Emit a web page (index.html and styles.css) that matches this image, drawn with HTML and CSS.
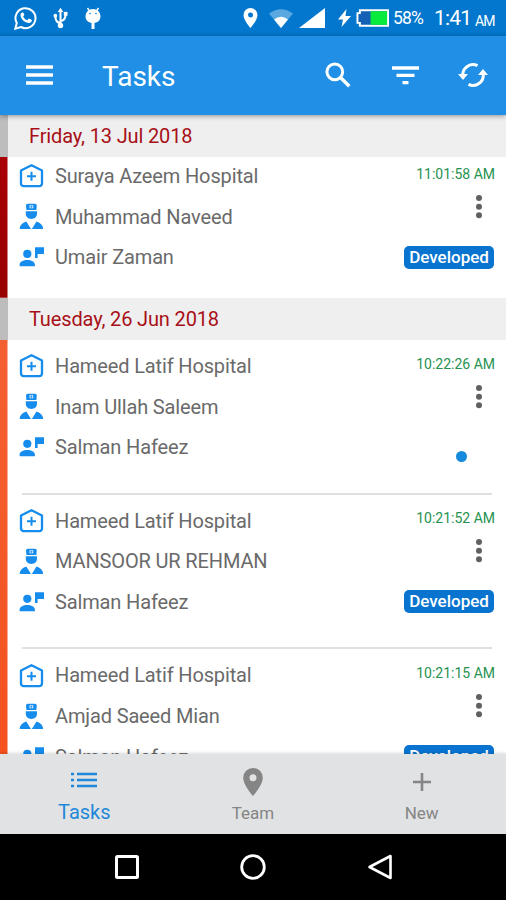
FILE: index.html
```html
<!DOCTYPE html>
<html lang="en">
<head>
<meta charset="utf-8">
<title>Tasks</title>
<link rel="stylesheet" href="styles.css">
</head>
<body>
<svg class="sprite" aria-hidden="true">
  <symbol id="hospital" viewBox="0 0 25 25"><path d="M2 7.600 12.500 2.200 23 7.600V20.500a2.600 2.600 0 0 1-2.600 2.600H4.600A2.600 2.600 0 0 1 2 20.500Z" fill="none" stroke="currentColor" stroke-width="2.300" stroke-linejoin="round"/><path d="M12.500 8.800v9M8 13.300h9" stroke="currentColor" stroke-width="2"/></symbol>
  <symbol id="doctor" viewBox="0 0 25 27"><path fill-rule="evenodd" d="M7 2.500Q7 .8 8.700.8H16Q17.800.8 17.800 2.500L17.400 7H7.400ZM10.600 2.300V5.300H14.200V2.300Z" fill="currentColor"/><path d="M12.400 2.500v2.600M11 3.800h2.800" stroke="currentColor" stroke-width=".8"/><path d="M6.800 8.200h11.200v2.600C18 14 15.500 16 12.400 16s-5.600-2-5.600-5.200ZM7.300 18.600 12 26H.6C.8 22.500 3 20 7.300 18.600ZM17.500 18.600 12.800 26H24.200C24 22.500 21.800 20 17.500 18.600Z" fill="currentColor"/></symbol>
  <symbol id="person" viewBox="0 0 25 25"><circle cx="8.300" cy="10.800" r="4.100" fill="currentColor"/><path d="M.6 23.300v-1.600C.6 18.600 4.500 17 8.300 17s7.600 1.600 7.600 4.700v1.600ZM16 4.300h9V11H18.600v4H16Z" fill="currentColor"/></symbol>
  <symbol id="pin" viewBox="0 0 14 20"><path fill-rule="evenodd" d="M7 0a7 7 0 0 0-7 7c0 5.200 7 13 7 13s7-7.800 7-13a7 7 0 0 0-7-7Zm0 4.500a2.500 2.500 0 1 1 0 5 2.500 2.500 0 0 1 0-5Z" fill="currentColor"/></symbol>
</svg>
<div class="phone">
  <div class="status">
    <svg class="whatsapp" viewBox="0 0 24 24"><path d="m1.300 22.700 1.500-5.600a10 10 0 1 1 4 3.900Z" fill="none" stroke="#fff" stroke-width="2"/><path d="M8.200 6.500c-.7 0-1.700 1-1.700 2.500 0 3.700 4.400 8 8.400 8 1.700 0 3-1.100 3-2.700 0-.5-2.700-1.800-3.200-1.700l-1.400 1.600c-1.700-.6-3.400-2.200-4.100-3.800l1.100-1.500c.1-.4-1-2.400-1.300-2.400Z" fill="#fff"/></svg>
    <svg class="usb" viewBox="0 0 16 22"><path d="M8 3v16M8 16.500Q2.500 15.500 2.500 9M8 14.500q5.500-1 5.500-8" fill="none" stroke="#fff" stroke-width="2.200"/><path d="m8 0 3 4.500H5Z" fill="#fff"/><circle cx="8" cy="19" r="2.900" fill="#fff"/><circle cx="2.500" cy="8.500" r="2" fill="#fff"/><path d="M11.500 4.500h4v4h-4Z" fill="#fff"/></svg>
    <svg class="droid" viewBox="0 0 16 22"><path d="M.5 8.500a7.500 7 0 0 1 15 0c0 4.500-3 7-7.500 7s-7.500-2.500-7.500-7Z" fill="#fff"/><path d="m2.500.5 2 3M13.500.5l-2 3" stroke="#fff" stroke-width="1.500"/><path d="M8 14v7.500" stroke="#fff" stroke-width="3"/><circle cx="5" cy="6" r=".8" fill="#0277cd"/><circle cx="11" cy="6" r=".8" fill="#0277cd"/></svg>
    <span class="spacer"></span>
    <svg class="loc"><use href="#pin"/></svg>
    <svg class="wifi" viewBox="0 0 24 19"><path d="M0 4.500Q12-4 24 4.500L12 19Z" fill="#59a8e0"/><path d="M5 10.500Q12 5 19 10.500L12 19Z" fill="#fff"/></svg>
    <svg class="signal" viewBox="0 0 26 20"><path d="M26 0v20H0Z" fill="#fff"/></svg>
    <svg class="bolt" viewBox="0 0 13 18"><path d="M8.500 0 0 10.500h5L3.500 18 13 7H7.500Z" fill="#fff"/></svg>
    <svg class="battery" viewBox="0 0 34 18"><path d="M4 1h29v16H4v-3H1.500V4H4Z" fill="#1460b5" stroke="#fff" stroke-width="2"/><path d="M15 2h17v14H15Z" fill="#08ea3c"/></svg>
    <span class="percent">58%</span>
    <span class="clock">1:41</span><span class="ampm">AM</span>
  </div>
  <header class="appbar">
    <svg class="menu" viewBox="0 0 27 20"><path d="M0 2h27M0 10h27M0 18h27" stroke="#fff" stroke-width="3.400"/></svg>
    <h1>Tasks</h1>
    <span class="spacer"></span>
    <svg class="search" viewBox="0 0 26 26"><circle cx="9.800" cy="9.800" r="7.900" fill="none" stroke="#fff" stroke-width="3"/><path d="m15.500 15.500 8.800 8.800" stroke="#fff" stroke-width="3.500"/></svg>
    <svg class="filter" viewBox="0 0 27 19"><path d="M0 2h27M4.500 9.300h18M10.500 16.700h6" stroke="#fff" stroke-width="3.300"/></svg>
    <svg class="sync" viewBox="0 0 30 26"><path d="M4.800 13A10.200 10.200 0 0 1 19.500 3.700M25.200 12A10.200 10.200 0 0 1 10.500 22.300" fill="none" stroke="#fff" stroke-width="3"/><path d="M0 12h10l-5 6ZM30 13H20l5-6Z" fill="#fff"/></svg>
  </header>
  <main class="list">
    <section>
      <h2 class="date">Friday, 13 Jul 2018</h2>
      <div class="group first">
        <article class="task">
          <div class="rows">
            <p><svg><use href="#hospital"/></svg><span>Suraya Azeem Hospital</span></p>
            <p><svg><use href="#doctor"/></svg><span>Muhammad Naveed</span></p>
            <p><svg><use href="#person"/></svg><span>Umair Zaman</span></p>
          </div>
          <div class="meta"><time>11:01:58 AM</time><svg class="more" viewBox="0 0 6 24"><circle cx="3" cy="3" r="3"/><circle cx="3" cy="11.700" r="3"/><circle cx="3" cy="20.300" r="3"/></svg><b class="badge">Developed</b></div>
        </article>
      </div>
    </section>
    <section>
      <h2 class="date">Tuesday, 26 Jun 2018</h2>
      <div class="group">
        <article class="task">
          <div class="rows">
            <p><svg><use href="#hospital"/></svg><span>Hameed Latif Hospital</span></p>
            <p><svg><use href="#doctor"/></svg><span>Inam Ullah Saleem</span></p>
            <p><svg><use href="#person"/></svg><span>Salman Hafeez</span></p>
          </div>
          <div class="meta"><time>10:22:26 AM</time><svg class="more" viewBox="0 0 6 24"><circle cx="3" cy="3" r="3"/><circle cx="3" cy="11.700" r="3"/><circle cx="3" cy="20.300" r="3"/></svg><i class="dot"></i></div>
        </article>
        <article class="task">
          <div class="rows">
            <p><svg><use href="#hospital"/></svg><span>Hameed Latif Hospital</span></p>
            <p><svg><use href="#doctor"/></svg><span>MANSOOR UR REHMAN</span></p>
            <p><svg><use href="#person"/></svg><span>Salman Hafeez</span></p>
          </div>
          <div class="meta"><time>10:21:52 AM</time><svg class="more" viewBox="0 0 6 24"><circle cx="3" cy="3" r="3"/><circle cx="3" cy="11.700" r="3"/><circle cx="3" cy="20.300" r="3"/></svg><b class="badge">Developed</b></div>
        </article>
        <article class="task">
          <div class="rows">
            <p><svg><use href="#hospital"/></svg><span>Hameed Latif Hospital</span></p>
            <p><svg><use href="#doctor"/></svg><span>Amjad Saeed Mian</span></p>
            <p><svg><use href="#person"/></svg><span>Salman Hafeez</span></p>
          </div>
          <div class="meta"><time>10:21:15 AM</time><svg class="more" viewBox="0 0 6 24"><circle cx="3" cy="3" r="3"/><circle cx="3" cy="11.700" r="3"/><circle cx="3" cy="20.300" r="3"/></svg><b class="badge">Developed</b></div>
        </article>
      </div>
    </section>
  </main>
  <nav class="tabs">
    <a class="tab active"><svg viewBox="0 0 26 16"><path d="M0 2h3M6 2h20M0 8h3M6 8h20M0 14h3M6 14h20" stroke="currentColor" stroke-width="2.700"/></svg><span>Tasks</span></a>
    <a class="tab team"><svg><use href="#pin"/></svg><span>Team</span></a>
    <a class="tab new"><svg viewBox="0 0 18 18"><path d="M9 0v18M0 9h18" stroke="currentColor" stroke-width="2.600"/></svg><span>New</span></a>
  </nav>
  <footer class="sysnav">
    <svg viewBox="0 0 28 28"><rect x="3.500" y="3.500" width="21" height="21" rx="1" fill="none" stroke="#fff" stroke-width="3"/></svg>
    <svg viewBox="0 0 28 28"><circle cx="14" cy="14" r="11.300" fill="none" stroke="#fff" stroke-width="2.800"/></svg>
    <svg viewBox="0 0 28 28"><path d="M24.500 3v22L3.500 14Z" fill="none" stroke="#fff" stroke-width="2.600" stroke-linejoin="round"/></svg>
  </footer>
</div>
</body>
</html>
```
FILE: styles.css
```css
* { box-sizing: border-box; margin: 0; padding: 0; }
body { font-family: Roboto, "Liberation Sans", sans-serif; width: 506px; height: 900px; overflow: hidden; background: #fff; }
.sprite { display: none; }
svg { flex: none; display: block; }
.phone { height: 900px; display: flex; flex-direction: column; }
.spacer { flex: 1; }

.status { height: 36px; flex: none; background: #0277cd; color: #fff; display: flex; align-items: center; padding: 0 11px 0 14px; }
.whatsapp { width: 24px; height: 24px; }
.usb { width: 15px; height: 22px; margin-left: 15px; }
.droid { width: 16px; height: 23px; margin-left: 17px; }
.loc { width: 15px; height: 20px; margin-right: 11px; }
.wifi { width: 24px; height: 19px; margin-right: 6px; }
.signal { width: 26px; height: 20px; margin-right: 13px; }
.bolt { width: 13px; height: 18px; margin-right: 5px; }
.battery { width: 33px; height: 18px; margin-right: 4px; }
.percent { font-size: 17.500px; width: 41px; letter-spacing: -.8px; }
.clock { font-size: 21px; width: 37px; letter-spacing: -.8px; }
.ampm { font-size: 14px; width: 20px; margin-left: 4px; padding-top: 5px; letter-spacing: -.8px; }

.appbar { position: relative; z-index: 1; height: 78.500px; flex: none; background: #208fe5; color: #fff; display: flex; align-items: center; padding: 0 18px 0 26px; box-shadow: 0 1px 5px rgba(0, 0, 0, .4); }
.appbar h1 { font-size: 28px; font-weight: 400; margin-left: 49px; padding-top: 2px; }
.menu { width: 27px; height: 20px; }
.search { width: 26px; height: 26px; margin-right: 41px; }
.filter { width: 27px; height: 19px; margin-right: 39px; }
.sync { width: 30px; height: 26px; }

.list { height: 639.500px; flex: none; overflow: hidden; }
.date { height: 42.500px; border-left: 8px solid #bdbdbd; background: #efefef; color: #a81018; font-size: 20px; font-weight: 400; line-height: 43px; padding-left: 21px; letter-spacing: -.14px; }
.group { background: linear-gradient(#f45f31, #f4511e) left / 7.500px 100% no-repeat; padding-left: 7px; }
.group.first { height: 140.500px; background: linear-gradient(#a90006, #980000) left / 7.500px 100% no-repeat; }
.task { height: 154.700px; padding: 5.500px 11px 0 12px; display: flex; justify-content: space-between; position: relative; }
.first .task { position: relative; top: -1.500px; height: 140px; padding-top: 0; }
.group:not(.first) .task::after { content: ""; position: absolute; left: 15px; right: 14px; bottom: 0; height: 2px; background: #e0e0e0; }
.rows p { height: 40.800px; display: flex; align-items: center; gap: 11px; font-size: 20px; letter-spacing: -.14px; color: #6a6a6a; }
.rows svg { width: 25px; height: 27px; color: #168ced; }
.rows p:first-child svg { height: 25px; }
.rows p:last-child svg { height: 25px; margin-top: -3px; }
.meta { display: flex; flex-direction: column; align-items: flex-end; padding-top: 10px; }
.meta time { font-size: 14px; line-height: 17px; color: #26924f; }
.more { width: 6px; height: 24px; margin: 12px 13.500px 0 0; fill: #606060; }
.badge { margin: 27px 1px 0 0; width: 90px; height: 23px; border-radius: 5px; background: #0874d0; color: #fff; font-size: 17px; font-weight: 500; line-height: 23px; text-align: center; }
.dot { width: 11px; height: 11px; border-radius: 50%; background: #168bdd; margin: 42px 28px 0 0; }

.tabs { position: relative; height: 79.500px; flex: none; background: #e1e2e4; display: grid; grid-template-columns: repeat(3, 1fr); box-shadow: 0 -1px 3px rgba(0, 0, 0, .15); }
.tab { display: flex; flex-direction: column; align-items: center; justify-content: space-between; color: #858585; font-size: 17px; line-height: 20px; padding: 14px 0 11px; }
.tab svg { width: 20px; height: 28px; }
.tab.active { color: #1f88d8; font-size: 20px; padding: 18px 0 12px; }
.tab.active svg { width: 26px; height: 16px; }
.tab.new { padding-top: 19px; }
.tab.new svg { width: 18px; height: 18px; }

.sysnav { flex: 1; background: #000; display: flex; justify-content: center; align-items: center; gap: 98.500px; }
.sysnav svg { width: 28px; height: 28px; }
```
